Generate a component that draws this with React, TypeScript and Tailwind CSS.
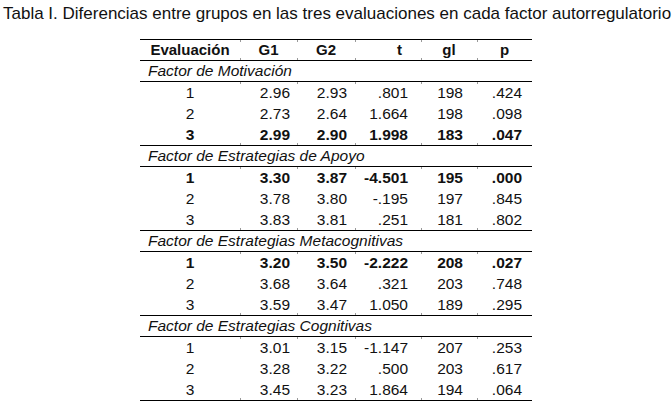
import React from "react";

type Row = { e: string; g1: string; g2: string; t: string; gl: string; p: string; b?: boolean };
type Group = { title: string; rows: Row[] };

const groups: Group[] = [
  {
    title: "Factor de Motivación",
    rows: [
      { e: "1", g1: "2.96", g2: "2.93", t: ".801", gl: "198", p: ".424" },
      { e: "2", g1: "2.73", g2: "2.64", t: "1.664", gl: "198", p: ".098" },
      { e: "3", g1: "2.99", g2: "2.90", t: "1.998", gl: "183", p: ".047", b: true },
    ],
  },
  {
    title: "Factor de Estrategias de Apoyo",
    rows: [
      { e: "1", g1: "3.30", g2: "3.87", t: "-4.501", gl: "195", p: ".000", b: true },
      { e: "2", g1: "3.78", g2: "3.80", t: "-.195", gl: "197", p: ".845" },
      { e: "3", g1: "3.83", g2: "3.81", t: ".251", gl: "181", p: ".802" },
    ],
  },
  {
    title: "Factor de Estrategias Metacognitivas",
    rows: [
      { e: "1", g1: "3.20", g2: "3.50", t: "-2.222", gl: "208", p: ".027", b: true },
      { e: "2", g1: "3.68", g2: "3.64", t: ".321", gl: "203", p: ".748" },
      { e: "3", g1: "3.59", g2: "3.47", t: "1.050", gl: "189", p: ".295" },
    ],
  },
  {
    title: "Factor de Estrategias Cognitivas",
    rows: [
      { e: "1", g1: "3.01", g2: "3.15", t: "-1.147", gl: "207", p: ".253" },
      { e: "2", g1: "3.28", g2: "3.22", t: ".500", gl: "203", p: ".617" },
      { e: "3", g1: "3.45", g2: "3.23", t: "1.864", gl: "194", p: ".064" },
    ],
  },
];

const cols = "grid grid-cols-[100px_57px_58px_66px_56px_55px]";

function Tick({ top, bottom }: { top?: boolean; bottom?: boolean }) {
  return (
    <>
      {top && <span className="absolute left-0 top-0 w-px h-[2px] bg-[#999]" />}
      {bottom && <span className="absolute left-0 bottom-0 w-px h-[2px] bg-[#999]" />}
    </>
  );
}

function Cell({
  children,
  className,
  top,
  bottom,
}: {
  children: React.ReactNode;
  className: string;
  top?: boolean;
  bottom?: boolean;
}) {
  return (
    <div className={`relative h-full flex items-center ${className}`}>
      <Tick top={top} bottom={bottom} />
      {children}
    </div>
  );
}

function DataRow({ r, top, bottom }: { r: Row; top?: boolean; bottom?: boolean }) {
  return (
    <div className={`${cols} h-[21px] ${r.b ? "font-bold" : ""}`}>
      <Cell className="justify-center">{r.e}</Cell>
      <Cell className="justify-end pr-[7px]" top={top} bottom={bottom}>{r.g1}</Cell>
      <Cell className="justify-end pr-[8px]" top={top} bottom={bottom}>{r.g2}</Cell>
      <Cell className="justify-end pr-[13px]" top={top} bottom={bottom}>{r.t}</Cell>
      <Cell className="justify-end pr-[14px]" top={top} bottom={bottom}>{r.gl}</Cell>
      <Cell className="justify-end pr-[10px]" top={top} bottom={bottom}>{r.p}</Cell>
    </div>
  );
}

export default function App() {
  return (
    <div
      className="w-[672px] h-[404px] bg-white text-[#111] overflow-hidden"
      style={{ fontFamily: '"Liberation Sans", Arial, sans-serif' }}
    >
      <div className="pl-[3px] pt-[4px] text-[17px] leading-[19px] whitespace-nowrap">
        Tabla I. Diferencias entre grupos en las tres evaluaciones en cada factor autorregulatorio
      </div>
      <div className="ml-[140px] mt-[16px] w-[392px] text-[15.5px] leading-[18px] border-t border-b border-black">
        <div className={`${cols} h-[21px] text-[15px] font-bold border-b border-black`}>
          <Cell className="justify-center">Evaluación</Cell>
          <Cell className="justify-center" top bottom>G1</Cell>
          <Cell className="justify-center" top bottom>G2</Cell>
          <Cell className="justify-end pr-[19px]" top bottom>t</Cell>
          <Cell className="justify-center" top bottom>gl</Cell>
          <Cell className="justify-center" top bottom>p</Cell>
        </div>
        {groups.map((g, gi) => (
          <div key={g.title} className={gi < groups.length - 1 ? "border-b border-black" : ""}>
            <div className="h-[21px] flex items-center italic border-b border-black pl-[8px]">{g.title}</div>
            {g.rows.map((r, i) => (
              <DataRow key={i} r={r} top={i === 0} bottom={i === g.rows.length - 1} />
            ))}
          </div>
        ))}
      </div>
    </div>
  );
}
